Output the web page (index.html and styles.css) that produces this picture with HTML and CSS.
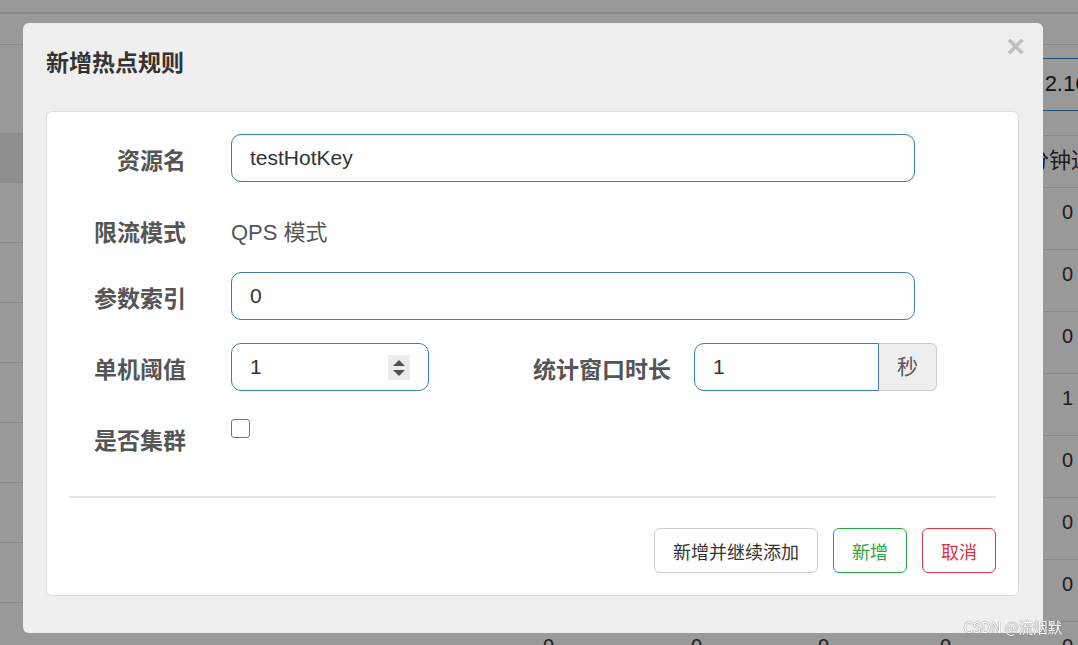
FILE: index.html
```html
<!DOCTYPE html>
<html lang="zh-CN">

<head>
    <meta charset="UTF-8">
    <meta name="viewport" content="width=device-width, initial-scale=1.0">
    <title>新增热点规则</title>
    <link rel="stylesheet" href="styles.css">
</head>

<body>
    <!-- page behind the dialog -->
    <div class="page">
        <div class="topbar"></div>
        <div class="navbar"></div>
        <div class="content">
            <aside class="side">
                <div class="side-spacer"></div>
                <div class="side-head"></div>
                <div class="side-item"></div>
                <div class="side-item"></div>
                <div class="side-item"></div>
                <div class="side-item"></div>
                <div class="side-item"></div>
                <div class="side-item"></div>
                <div class="side-item"></div>
                <div class="side-item"></div>
            </aside>
            <main class="main">
                <div class="toolbar">
                    <div class="search">192.168.2.168</div>
                </div>
                <div class="trow thead">
                    <span class="cell c1">资源名</span>
                    <span class="cell c2">通过QPS</span>
                    <span class="cell c3">拒绝QPS</span>
                    <span class="cell c4">线程数</span>
                    <span class="cell c5"></span>
                    <span class="cell last">每分钟通过</span>
                </div>
                <div class="trow"><span class="cell c1"></span><span class="cell c2">0</span><span class="cell c3">0</span><span class="cell c4">0</span><span class="cell c5">0</span><span class="cell last">0</span></div>
                <div class="trow"><span class="cell c1"></span><span class="cell c2">0</span><span class="cell c3">0</span><span class="cell c4">0</span><span class="cell c5">0</span><span class="cell last">0</span></div>
                <div class="trow"><span class="cell c1"></span><span class="cell c2">0</span><span class="cell c3">0</span><span class="cell c4">0</span><span class="cell c5">0</span><span class="cell last">0</span></div>
                <div class="trow"><span class="cell c1"></span><span class="cell c2">0</span><span class="cell c3">0</span><span class="cell c4">0</span><span class="cell c5">0</span><span class="cell last">1</span></div>
                <div class="trow"><span class="cell c1"></span><span class="cell c2">0</span><span class="cell c3">0</span><span class="cell c4">0</span><span class="cell c5">0</span><span class="cell last">0</span></div>
                <div class="trow"><span class="cell c1"></span><span class="cell c2">0</span><span class="cell c3">0</span><span class="cell c4">0</span><span class="cell c5">0</span><span class="cell last">0</span></div>
                <div class="trow"><span class="cell c1"></span><span class="cell c2">0</span><span class="cell c3">0</span><span class="cell c4">0</span><span class="cell c5">0</span><span class="cell last">0</span></div>
                <div class="trow"><span class="cell c1"></span><span class="cell c2">0</span><span class="cell c3">0</span><span class="cell c4">0</span><span class="cell c5">0</span><span class="cell last">0</span></div>
            </main>
        </div>
    </div>

    <div class="backdrop"></div>

    <!-- dialog -->
    <div class="modal">
        <button class="close" type="button">&times;</button>
        <h4 class="modal-title">新增热点规则</h4>

        <div class="panel">
            <div class="form-row">
                <label class="form-label">资源名</label>
                <input class="form-control wide" type="text" value="testHotKey">
            </div>

            <div class="form-row static-row">
                <label class="form-label">限流模式</label>
                <span class="static-text">QPS 模式</span>
            </div>

            <div class="form-row">
                <label class="form-label">参数索引</label>
                <input class="form-control wide" type="text" value="0">
            </div>

            <div class="form-row">
                <label class="form-label">单机阈值</label>
                <div class="number-box">
                    <input class="form-control short" type="text" value="1">
                    <span class="spinner">
                        <span class="arrow up"></span>
                        <span class="arrow down"></span>
                    </span>
                </div>
                <label class="form-label second">统计窗口时长</label>
                <div class="input-group">
                    <input class="form-control grouped" type="text" value="1">
                    <span class="addon">秒</span>
                </div>
            </div>

            <div class="form-row">
                <label class="form-label">是否集群</label>
                <input class="checkbox" type="checkbox">
            </div>

            <hr class="divider">

            <div class="actions">
                <button class="btn btn-default" type="button">新增并继续添加</button>
                <button class="btn btn-success" type="button">新增</button>
                <button class="btn btn-danger" type="button">取消</button>
            </div>
        </div>
    </div>

    <div class="watermark">CSDN @流烟默</div>
</body>

</html>
```

FILE: styles.css
```css
* {
    box-sizing: border-box;
}

body {
    margin: 0;
    font-family: "Liberation Sans", Arial, "Noto Sans CJK SC", sans-serif;
    color: #333;
    background-color: #fff;
    overflow: hidden;
}

/* Page behind the dialog */
.page {
    width: 1078px;
    height: 645px;
    overflow: hidden;
}

.topbar {
    height: 14px;
    border-bottom: 2px solid #e2e2e2;
}

.navbar {
    height: 31px;
    border-bottom: 1px solid #e2e2e2;
}

.content {
    display: flex;
}

.side {
    flex: none;
    width: 200px;
}

.side-spacer {
    height: 88px;
}

.side-head {
    height: 50px;
    background-color: #eee;
    border-top: 1px solid #e2e2e2;
    border-bottom: 1px solid #e2e2e2;
}

.side-item {
    height: 60px;
    border-bottom: 1px solid #e2e2e2;
}

.main {
    flex: 1;
    min-width: 0;
}

.toolbar {
    height: 90px;
    padding-top: 13px;
}

.search {
    margin-left: 680px;
    width: 240px;
    height: 53px;
    border: 1px solid #337ab7;
    padding-left: 78px;
    font-size: 22px;
    line-height: 50px;
    white-space: nowrap;
    color: #222;
}

.trow {
    display: flex;
    height: 62px;
    border-top: 1px solid #e2e2e2;
    font-size: 20px;
    line-height: 48px;
    white-space: nowrap;
}

.thead {
    height: 52px;
    font-size: 22px;
    line-height: 50px;
}

.cell {
    display: block;
    flex: none;
    overflow: hidden;
}

.c1 { width: 343px; }
.c2 { width: 148px; }
.c3 { width: 127px; }
.c4 { width: 122px; }
.c5 { width: 38px; }

.last {
    width: 100px;
    padding-left: 84px;
    overflow: visible;
}

.thead .last {
    padding-left: 27px;
}

.backdrop {
    position: fixed;
    inset: 0;
    background-color: rgba(0, 0, 0, 0.4);
}

/* Dialog */
.modal {
    position: absolute;
    left: 23px;
    top: 23px;
    width: 1020px;
    height: 610px;
    padding: 24px 24px 0 23px;
    background-color: #efefef;
    border-radius: 6px;
}

.modal-title {
    margin: 0;
    font-size: 23px;
    line-height: 32px;
    font-weight: bold;
    color: #333;
}

.close {
    position: absolute;
    top: 7px;
    right: 18px;
    padding: 0;
    border: 0;
    background: none;
    font-family: "Liberation Sans", Arial, sans-serif;
    font-size: 32px;
    font-weight: bold;
    line-height: 32px;
    color: #000;
    opacity: 0.2;
}

.panel {
    margin-top: 32px;
    height: 485px;
    padding: 22px 22px 0 22px;
    background-color: #fff;
    border: 1px solid #ddd;
    border-radius: 6px;
}

.form-row {
    display: flex;
    align-items: flex-start;
    margin-bottom: 23px;
}

.form-row:first-child {
    margin-bottom: 24px;
}

.static-row {
    height: 43px;
}

.form-label {
    width: 117px;
    margin-right: 45px;
    padding-top: 11px;
    text-align: right;
    font-size: 23px;
    line-height: 32px;
    font-weight: bold;
    color: #555;
}

.form-label.second {
    width: 242px;
    margin-right: 23px;
}

.static-text {
    padding-top: 11px;
    font-size: 22px;
    line-height: 32px;
    color: #555;
}

.form-control {
    height: 48px;
    padding: 0 18px;
    border: 1px solid #3a7bb8;
    border-radius: 10px;
    font-family: "Liberation Sans", Arial, "Noto Sans CJK SC", sans-serif;
    font-size: 21px;
    color: #333;
    background-color: #fff;
    outline: none;
}

.wide {
    width: 684px;
}

.number-box {
    position: relative;
}

.short {
    width: 198px;
}

.spinner {
    position: absolute;
    left: 157px;
    top: 12px;
    width: 22px;
    height: 25px;
    display: flex;
    flex-direction: column;
    align-items: center;
    justify-content: center;
    gap: 4px;
    background-color: #ececec;
}

.arrow {
    width: 0;
    height: 0;
    border-left: 6px solid transparent;
    border-right: 6px solid transparent;
}

.arrow.up {
    border-bottom: 6px solid #505050;
}

.arrow.down {
    border-top: 6px solid #505050;
}

.input-group {
    display: flex;
}

.grouped {
    width: 185px;
    border-radius: 10px 0 0 10px;
}

.addon {
    width: 58px;
    height: 48px;
    border: 1px solid #ccc;
    border-left: 0;
    border-radius: 0 6px 6px 0;
    background-color: #eee;
    text-align: center;
    font-size: 21px;
    line-height: 46px;
    color: #555;
}

.checkbox {
    appearance: none;
    width: 19px;
    height: 19px;
    margin: 5px 0 0 0;
    border: 1.5px solid #767676;
    border-radius: 3px;
    background-color: #fff;
}

.divider {
    margin: 39px 0 30px 0;
    border: 0;
    border-top: 2px solid #e5e5e5;
}

.actions {
    display: flex;
    justify-content: flex-end;
    gap: 15px;
}

.btn {
    height: 45px;
    padding: 0 18px;
    border: 1px solid #ccc;
    border-radius: 6px;
    background-color: #fff;
    font-family: "Liberation Sans", Arial, "Noto Sans CJK SC", sans-serif;
    font-size: 18px;
    color: #333;
}

.btn-success {
    border-color: #28a745;
    color: #28a745;
}

.btn-danger {
    border-color: #dc3545;
    color: #dc3545;
}

.watermark {
    position: absolute;
    right: 16px;
    top: 617px;
    font-family: "Noto Sans CJK SC", sans-serif;
    font-size: 14.5px;
    line-height: 20px;
    color: #fff;
    text-shadow: 0 0 1px #777, 0 0 1px #777;
}
```
